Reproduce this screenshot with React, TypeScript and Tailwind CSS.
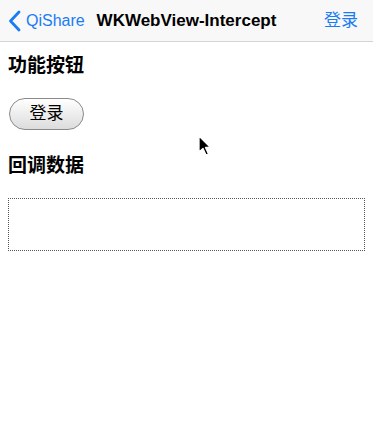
import React from "react";

const cjk = { fontFamily: '"Liberation Sans", "Noto Sans CJK SC", sans-serif' };

function Cursor() {
  return (
    <svg className="absolute left-[197px] top-[135px]" width="16" height="22" viewBox="0 0 16 22">
      <path d="M2 1 L2 17 L6 13.5 L9 20 L11.5 19 L8.5 12.5 L13.5 12.5 Z" fill="#000" stroke="#fff" strokeWidth="1.3" strokeLinejoin="round" />
    </svg>
  );
}

export default function App() {
  return (
    <div className="relative w-[373px] h-[434px] bg-white overflow-hidden" style={cjk}>
      <div className="relative flex items-center h-[42px] bg-[#f8f8f8] border-b border-[#d4d4d4]">
        <div className="flex items-center pl-[8px] text-[#1a7cf5] text-[16px]">
          <svg width="13" height="22" viewBox="0 0 13 22">
            <path d="M11 2 L2.5 11 L11 20" fill="none" stroke="#1a7cf5" strokeWidth="2.8" strokeLinecap="round" strokeLinejoin="round" />
          </svg>
          <span className="ml-[5px]">QiShare</span>
        </div>
        <div className="absolute left-0 right-0 text-center font-semibold text-[17px] text-black pointer-events-none">
          WKWebView-Intercept
        </div>
        <div className="ml-auto pr-[15px] text-[#1a7cf5] text-[17px]">登录</div>
      </div>

      <div className="px-[8px]">
        <h2 className="mt-[12px] text-[19px] font-bold leading-[24px] text-black">功能按钮</h2>
        <button className="mt-[20px] ml-[1px] w-[75px] h-[32px] rounded-full border border-[#8a8a8a] bg-gradient-to-b from-white to-[#dcdcdc] text-[17px] text-black">
          登录
        </button>
        <h2 className="mt-[24px] text-[19px] font-bold leading-[24px] text-black">回调数据</h2>
        <div className="mt-[20px] h-[53px] border border-dotted border-[#555]"></div>
      </div>
      <Cursor />
    </div>
  );
}
